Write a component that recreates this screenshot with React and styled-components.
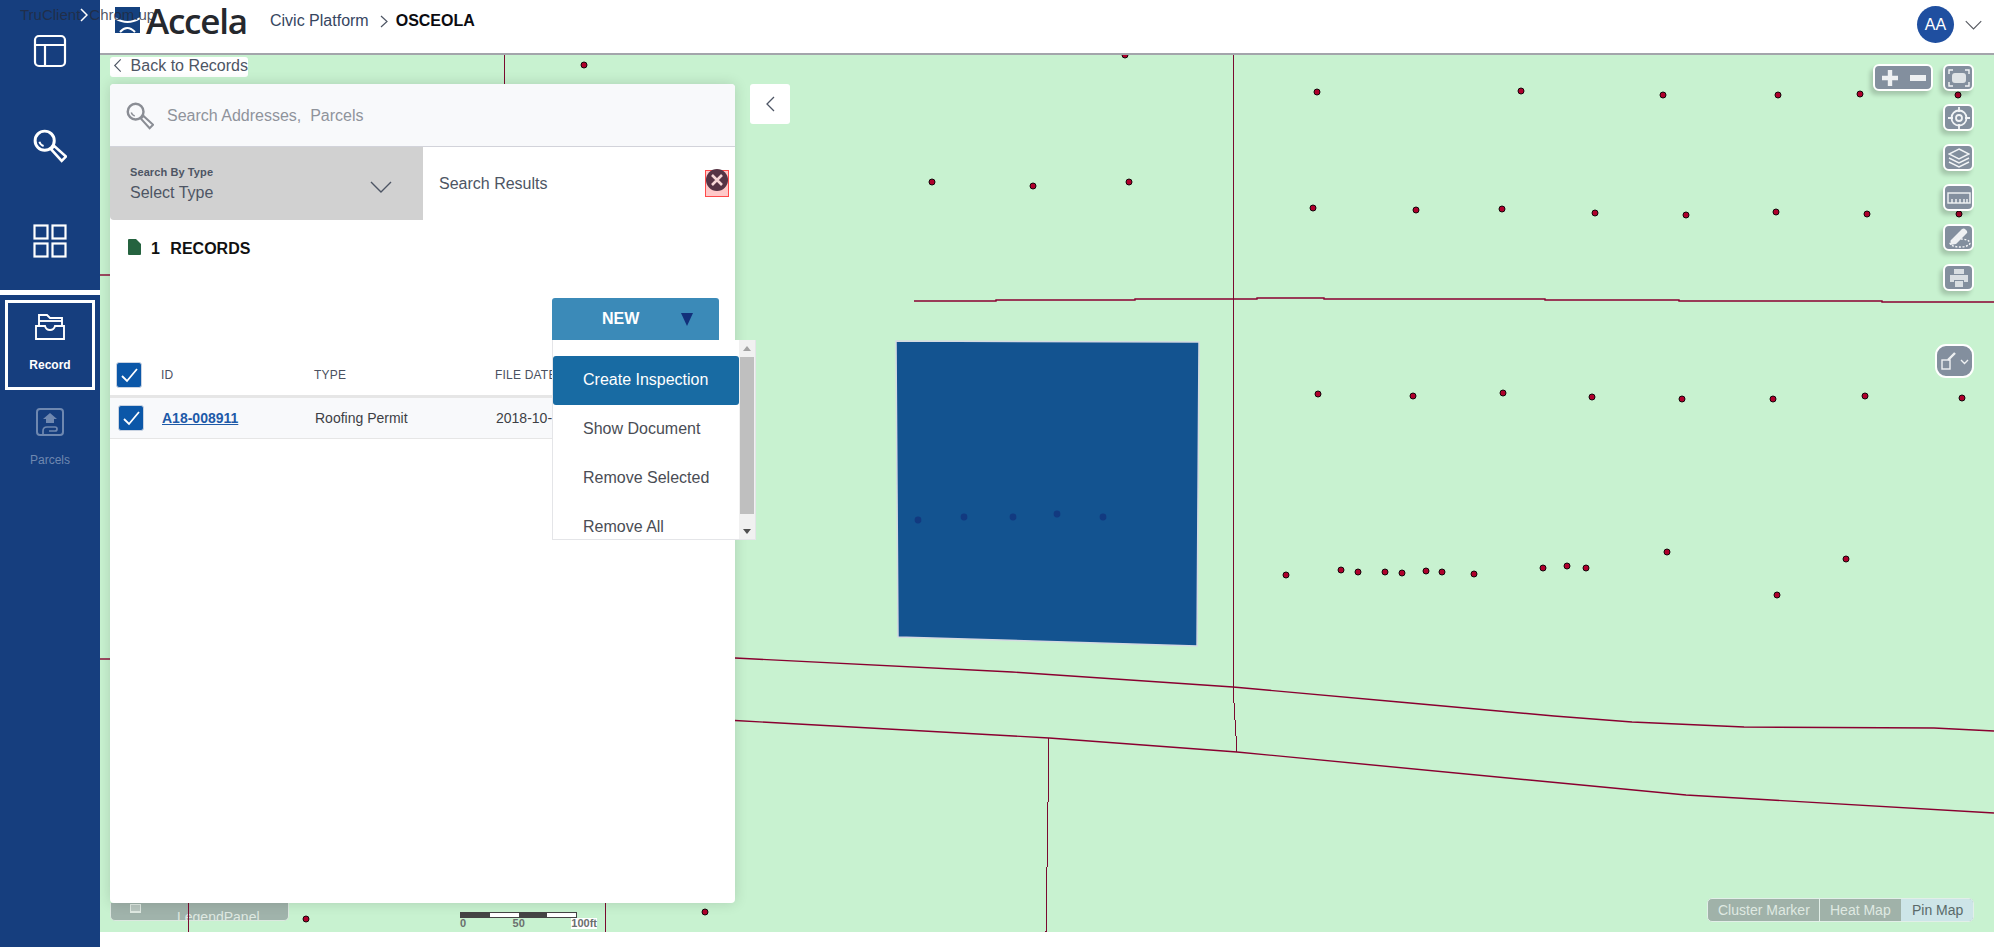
import React from 'react';
import styled, { createGlobalStyle } from 'styled-components';

const GlobalStyle = createGlobalStyle`
    html, body {
        margin: 0;
        padding: 0;
        background: #fff;
        font-family: "Liberation Sans", Arial, sans-serif;
    }
    * { box-sizing: border-box; }
`;

const Page = styled.div`
    display: grid;
    grid-template-columns: 100px 1fr;
    width: 1994px;
    height: 947px;
    overflow: hidden;
    position: relative;
`;

/* sidebar */
const Sidebar = styled.nav`
    background: #163e7e;
    display: flex;
    flex-direction: column;
    padding-top: 3px;
`;
const NavItem = styled.div`
    height: 95px;
    display: flex;
    align-items: center;
    justify-content: center;
`;
const NavRule = styled.div`
    height: 5px;
    margin-top: 2px;
    background: #fff;
`;
const ActiveItem = styled.div`
    width: 90px;
    height: 90px;
    margin: 5px 5px 0;
    border: 3px solid #fff;
    display: flex;
    flex-direction: column;
    align-items: center;
    padding-top: 11px;
    color: #fff;
    font-size: 12px;
    font-weight: bold;
`;
const ItemLabel = styled.span`
    margin-top: 18px;
`;
const MutedItem = styled.div`
    display: flex;
    flex-direction: column;
    align-items: center;
    padding-top: 17px;
    color: #6f88b0;
    font-size: 12px;
`;
const MutedLabel = styled.span`
    margin-top: 16px;
`;
const ToolTip = styled.div`
    position: absolute;
    left: 20px;
    top: 6px;
    font-size: 15px;
    color: rgba(35, 42, 60, 0.8);
    z-index: 5;
    white-space: nowrap;
    display: flex;
    align-items: center;
`;
const TipArrow = styled.svg`
    margin: 0 1px 0 0;
`;

/* header */
const Main = styled.div`
    display: flex;
    flex-direction: column;
`;
const Header = styled.header`
    height: 55px;
    flex: none;
    border-bottom: 2px solid #a3a5ab;
    background: #fff;
    display: flex;
    align-items: flex-start;
    padding: 7px 12px 0 15px;
`;
const LogoWord = styled.span`
    font-family: "Open Sans", sans-serif;
    font-size: 35px;
    line-height: 27px;
    font-weight: 600;
    letter-spacing: -1.2px;
    color: #25282d;
    margin-left: 6px;
    width: 124px;
`;
const Crumb = styled.span`
    font-size: 16px;
    line-height: 26px;
    margin-top: 1px;
    color: #36465f;
`;
const CrumbChevron = styled.svg`
    margin: 8px 8px 0 11px;
`;
const Org = styled.span`
    font-size: 16px;
    line-height: 26px;
    margin-top: 1px;
    font-weight: bold;
    color: #0b0b10;
`;
const UserBox = styled.div`
    margin-left: auto;
    display: flex;
    align-items: center;
    gap: 11px;
    margin-top: -1px;
`;
const Avatar = styled.div`
    width: 37px;
    height: 37px;
    border-radius: 50%;
    background: #1f4fa0;
    color: #fff;
    font-size: 16px;
    display: flex;
    align-items: center;
    justify-content: center;
`;

/* map */
const MapArea = styled.div`
    position: relative;
    flex: none;
    height: 877px;
    background: #c8f2d0;
    overflow: hidden;
`;
const MapDrawing = styled.svg`
    position: absolute;
    left: 0;
    top: 0;
`;
const BackLink = styled.div`
    position: absolute;
    left: 10px;
    top: 2px;
    width: 138px;
    height: 20px;
    background: #fff;
    border-radius: 3px;
    display: flex;
    align-items: center;
    padding: 0 0 3px 3px;
    gap: 9px;
    font-size: 16px;
    white-space: nowrap;
    color: #4d5564;
`;
const CollapseBtn = styled.div`
    position: absolute;
    left: 650px;
    top: 29px;
    width: 40px;
    height: 40px;
    background: #fff;
    border-radius: 3px;
    display: flex;
    align-items: center;
    justify-content: center;
`;

/* panel */
const Panel = styled.section`
    position: absolute;
    left: 10px;
    top: 29px;
    width: 625px;
    height: 819px;
    background: #fff;
    border-radius: 4px;
    box-shadow: 0 0 14px rgba(0, 0, 0, 0.14);
    z-index: 2;
`;
const SearchBar = styled.div`
    height: 63px;
    background: #f8f9fb;
    border-bottom: 1px solid #d2d3da;
    border-radius: 4px 4px 0 0;
    display: flex;
    align-items: center;
    padding: 2px 0 0 16px;
    gap: 13px;
    font-size: 16px;
    color: #8f939b;
`;
const TypeRow = styled.div`
    display: flex;
    height: 73px;
`;
const TypeSelect = styled.div`
    width: 313px;
    background: #d1d1d1;
    border-radius: 0 0 0 4px;
    padding: 19px 31px 0 20px;
    display: flex;
    justify-content: space-between;
`;
const TypeCaption = styled.div`
    font-size: 11px;
    font-weight: bold;
    letter-spacing: 0.1px;
    color: #4d5564;
`;
const TypeValue = styled.div`
    font-size: 16px;
    color: #4d5564;
    margin-top: 6px;
`;
const TypeChevron = styled.div`
    margin-top: 13px;
`;
const ResultsTab = styled.div`
    flex: 1;
    display: flex;
    justify-content: space-between;
    align-items: flex-start;
    padding: 23px 6px 0 16px;
    font-size: 16px;
    line-height: 27px;
    color: #4d5564;
`;
const CloseBox = styled.div`
    width: 24px;
    height: 27px;
    background: rgba(255, 60, 60, 0.28);
    border: 1px solid #ff4a4a;
    position: relative;
`;
const CloseIcon = styled.svg`
    position: absolute;
    left: 0;
    top: -2px;
`;
const RecordsRow = styled.div`
    height: 78px;
    display: flex;
    align-items: flex-start;
    padding: 19px 0 0 18px;
    gap: 10px;
    font-size: 16px;
    line-height: 20px;
    font-weight: bold;
    color: #111;
    word-spacing: 6px;
`;
const ActionRow = styled.div`
    display: flex;
    justify-content: flex-end;
    padding-right: 16px;
`;
const NewWrap = styled.div`
    position: relative;
    width: 167px;
`;
const NewButton = styled.div`
    height: 42px;
    background: #3b8ab8;
    border-radius: 3px 3px 0 0;
    color: #fff;
    font-size: 16px;
    font-weight: bold;
    display: flex;
    align-items: center;
    position: relative;
    padding-left: 50px;
`;
const Caret = styled.span`
    position: absolute;
    left: 129px;
    top: 15px;
    width: 0;
    height: 0;
    border-left: 6px solid transparent;
    border-right: 6px solid transparent;
    border-top: 13px solid #12307a;
`;
const Menu = styled.div`
    position: absolute;
    left: 0;
    top: 100%;
    width: 204px;
    height: 200px;
    background: #fff;
    border: 1px solid #e4e5e8;
    border-top: none;
    display: flex;
    overflow: hidden;
    z-index: 3;
`;
const MenuList = styled.div`
    flex: 1;
    padding-top: 16px;
`;
const MenuItem = styled.div`
    height: 49px;
    padding: 0 0 2px 30px;
    display: flex;
    align-items: center;
    font-size: 16px;
    color: ${(p) => (p.$active ? '#fff' : '#4a4d55')};
    background: ${(p) => (p.$active ? '#186ba3' : 'transparent')};
    border-radius: 3px;
`;
const ScrollTrack = styled.div`
    width: 16px;
    background: #f1f1f1;
    display: flex;
    flex-direction: column;
    align-items: center;
    padding: 6px 0 5px;
`;
const ScrollThumb = styled.div`
    width: 14px;
    height: 157px;
    margin-top: 6px;
    background: #bfbfbf;
`;
const ScrollUp = styled.span`
    border-left: 4px solid transparent;
    border-right: 4px solid transparent;
    border-bottom: 5px solid #a3a3a3;
`;
const ScrollDown = styled.span`
    margin-top: auto;
    border-left: 4px solid transparent;
    border-right: 4px solid transparent;
    border-top: 5px solid #505050;
`;
const TableHead = styled.div`
    display: grid;
    grid-template-columns: 45px 153px 181px 1fr;
    align-items: center;
    height: 58px;
    padding: 21px 0 6px 6px;
    border-bottom: 3px solid #e6e6e6;
    font-size: 12px;
    letter-spacing: 0.2px;
    color: #4a5160;
`;
const TableRow = styled.div`
    display: grid;
    grid-template-columns: 44px 153px 181px 1fr;
    align-items: center;
    height: 41px;
    padding-left: 8px;
    background: #f8f9fb;
    border-bottom: 1px solid #e6e6e6;
    font-size: 14px;
    color: #3d3f45;
`;
const RecordLink = styled.a`
    color: #1e5aa8;
    font-weight: bold;
    text-decoration: underline;
`;
const CheckBox = styled.div`
    width: 26px;
    height: 26px;
    background: #0b57a8;
    border: 1px solid #c9d3e2;
    border-radius: 3px;
    display: flex;
    align-items: center;
    justify-content: center;
`;

/* map controls */
const ControlColumn = styled.div`
    position: absolute;
    left: 1843px;
    top: 9px;
    display: flex;
    flex-direction: column;
    gap: 13px;
`;
const MapButton = styled.div`
    width: 31px;
    height: 27px;
    background: #838f9e;
    border: 2px solid #fff;
    border-radius: 6px;
    box-shadow: -3px 4px 4px rgba(0, 0, 0, 0.18);
    display: flex;
    align-items: center;
    justify-content: center;
`;
const ZoomButton = styled(MapButton)`
    position: absolute;
    left: 1773px;
    top: 9px;
    width: 60px;
    justify-content: space-around;
`;
const DrawButton = styled.div`
    position: absolute;
    left: 1835px;
    top: 289px;
    width: 39px;
    height: 34px;
    background: #838f9e;
    border: 2px solid #fff;
    border-radius: 11px;
    display: flex;
    align-items: center;
    justify-content: center;
`;
const LayerSwitch = styled.div`
    position: absolute;
    left: 1607px;
    top: 843px;
    height: 24px;
    display: flex;
    border: 1px solid #e2efe8;
    border-radius: 5px;
    overflow: hidden;
    font-size: 14px;
    background: #a0b2a9;
    color: #dfe9e2;
`;
const LayerTab = styled.div`
    padding: 0 0 0 ${(p) => p.$pad}px;
    width: ${(p) => p.$w}px;
    display: flex;
    align-items: center;
    border-right: ${(p) => (p.$line ? '1px solid #e2efe8' : 'none')};
    background: ${(p) => (p.$on ? '#cde5e8' : 'transparent')};
    color: ${(p) => (p.$on ? '#5a6a6a' : '#dfe9e2')};
`;
const LegendPanel = styled.div`
    position: absolute;
    left: 10px;
    top: 848px;
    width: 179px;
    height: 18px;
    background: #a0b3ab;
    border-radius: 0 0 5px 5px;
    border: 1px solid #dce8e0;
    border-top: none;
    overflow: hidden;
    padding: 1px 0 0 19px;
    display: flex;
    color: #dfe9e2;
    font-size: 14px;
    line-height: 16px;
`;
const LegendBox = styled.div`
    width: 11px;
    height: 9px;
    background: #b9c7c0;
    border: 1px solid #dfe9e2;
    border-bottom-width: 2px;
`;
const LegendText = styled.span`
    margin: 5px 0 0 36px;
`;
const ScaleBar = styled.div`
    position: absolute;
    left: 360px;
    top: 857px;
    width: 117px;
    color: #6b6f6e;
    font-size: 11px;
    font-weight: bold;
`;
const ScaleTrack = styled.div`
    display: flex;
    height: 6px;
    border: 1px solid #444;
`;
const ScaleCell = styled.span`
    flex: 1;
    background: ${(p) => (p.$dark ? '#444' : '#fff')};
`;
const ScaleLabels = styled.div`
    display: flex;
    justify-content: space-between;
    line-height: 11px;
    margin-right: -20px;
`;
const ScaleEnd = styled.span`
    background: #fff;
`;
const Footer = styled.div`
    flex: 1;
    background: #fff;
`;

const redDots = [
    [1125, 55], [584, 65], [1317, 92], [1521, 91], [1663, 95], [1778, 95], [1860, 94], [1958, 95],
    [932, 182], [1033, 186], [1129, 182],
    [1313, 208], [1416, 210], [1502, 209], [1595, 213], [1686, 215], [1776, 212], [1867, 214], [1959, 214],
    [1318, 394], [1413, 396], [1503, 393], [1592, 397], [1682, 399], [1773, 399], [1865, 396], [1962, 398],
    [1286, 575], [1341, 570], [1358, 572], [1385, 572], [1402, 573], [1426, 571], [1442, 572], [1474, 574],
    [1543, 568], [1567, 566], [1586, 568], [1667, 552], [1846, 559], [1777, 595],
    [306, 919], [705, 912],
];
const blueDots = [[918, 520], [964, 517], [1013, 517], [1057, 514], [1103, 517]];
const roads = [
    'M914 301H996V300H1135V299H1257V298H1324V299H1545V300H1679V301H1882V302H1994',
    'M735 658L1012 672L1233 687L1399 702L1554 716L1632 722L1744 727L1934 728L1994 731',
    'M735 720.5L1049 738L1237 752L1686 795L1994 813',
    'M100 275H110',
    'M100 659H110',
];
const parcelEdges = [
    'M1233 55V687L1237 752',
    'M1049 738L1046 932',
    'M504 55V84',
    'M188.5 903V932',
    'M605.5 903V932',
];

function MapLayer() {
    return (
        <MapDrawing width="1894" height="877" viewBox="100 55 1894 877">
            {roads.map((d) => (
                <path key={d} d={d} fill="none" stroke="#8a0030" strokeWidth="1.4" />
            ))}
            {parcelEdges.map((d) => (
                <path key={d} d={d} fill="none" stroke="#7a0a30" strokeWidth="1" shapeRendering="crispEdges" />
            ))}
            <polygon points="896,341 1199,342 1197,646 898,637" fill="#135390" stroke="#d5dae2" strokeWidth="1.5" />
            {redDots.map(([x, y]) => (
                <circle key={`${x}-${y}`} cx={x} cy={y} r="3" fill="#b0002c" stroke="#14060a" strokeWidth="1" />
            ))}
            {blueDots.map(([x, y]) => (
                <circle key={x} cx={x} cy={y} r="3.4" fill="#123a80" />
            ))}
        </MapDrawing>
    );
}

const Check = () => (
    <svg width="20" height="20" viewBox="0 0 20 20">
        <path d="M3 11L8 16L18 4" fill="none" stroke="#fff" strokeWidth="1.8" />
    </svg>
);

const Chevron = ({ size = 10, h = 16, color = '#4d5564', sw = 1.3 }) => (
    <svg width={size} height={h} viewBox="0 0 10 16">
        <path d="M9 1L2 8L9 15" fill="none" stroke={color} strokeWidth={sw} />
    </svg>
);

const DownChevron = ({ w = 22, h = 12, color = '#4d5564' }) => (
    <svg width={w} height={h} viewBox="0 0 22 12">
        <path d="M1 1L11 11L21 1" fill="none" stroke={color} strokeWidth="1.4" />
    </svg>
);

const Magnifier = ({ color, size }) => (
    <svg width={size} height={size} viewBox="0 0 32 32">
        <circle cx="11" cy="11" r="9" fill="none" stroke={color} strokeWidth="2.8" />
        <path d="M6 12a6 6 0 0 0 4 4" fill="none" stroke={color} strokeWidth="1.8" />
        <path d="M17 19L20 16L31 26L27 30Z" fill="none" stroke={color} strokeWidth="2.4" />
    </svg>
);

const Logo = () => (
    <svg width="25" height="26" viewBox="0 0 25 26">
        <rect width="25" height="26" fill="#14417f" />
        <path d="M0 11Q12.5 19 25 11" fill="none" stroke="#fff" strokeWidth="2" />
        <path d="M5 25Q12 17 20 25" fill="none" stroke="#fff" strokeWidth="2" />
    </svg>
);

const ic = { fill: 'none', stroke: '#f2f4f6', strokeWidth: 1.4 };

function App() {
    return (
        <Page>
            <GlobalStyle />
            <ToolTip>
                TruClient
                <TipArrow width="8" height="14" viewBox="0 0 8 14">
                    <path d="M1 1L7 7L1 13" fill="none" stroke="#fff" strokeWidth="1.5" />
                </TipArrow>
                Chrom.up
            </ToolTip>
            <Sidebar>
                <NavItem>
                    <svg width="34" height="34" viewBox="0 0 34 34" fill="none" stroke="#fff" strokeWidth="2.2">
                        <rect x="2" y="2" width="30" height="30" rx="4" />
                        <path d="M2 11H32M12 11V32" />
                    </svg>
                </NavItem>
                <NavItem>
                    <Magnifier color="#fff" size={34} />
                </NavItem>
                <NavItem>
                    <svg width="34" height="34" viewBox="0 0 34 34" fill="none" stroke="#fff" strokeWidth="2.2">
                        <rect x="1.5" y="1.5" width="13" height="13" />
                        <rect x="19.5" y="1.5" width="13" height="13" />
                        <rect x="1.5" y="19.5" width="13" height="13" />
                        <rect x="19.5" y="19.5" width="13" height="13" />
                    </svg>
                </NavItem>
                <NavRule />
                <ActiveItem>
                    <svg width="30" height="26" viewBox="0 0 30 26" fill="none" stroke="#fff" strokeWidth="1.9">
                        <path d="M4 12V1H12L15 4H27V12" />
                        <path d="M4 7H27" />
                        <path d="M1 12H10Q11 16 15 16Q19 16 20 12H29V25H1Z" />
                    </svg>
                    <ItemLabel>Record</ItemLabel>
                </ActiveItem>
                <MutedItem>
                    <svg width="30" height="30" viewBox="0 0 30 30" fill="none" stroke="#6f88b0" strokeWidth="2">
                        <rect x="2" y="2" width="26" height="26" rx="3" />
                        <path d="M15 6L22 12H19V16H11V12H8Z" fill="#6f88b0" stroke="none" />
                        <path d="M8 27V24Q8 20 12 20H20Q22 20 22 22T20 24H14" strokeWidth="1.7" />
                    </svg>
                    <MutedLabel>Parcels</MutedLabel>
                </MutedItem>
            </Sidebar>
            <Main>
                <Header>
                    <Logo />
                    <LogoWord>Accela</LogoWord>
                    <Crumb>Civic Platform</Crumb>
                    <CrumbChevron width="8" height="13" viewBox="0 0 8 13">
                        <path d="M1 1L7 6.5L1 12" fill="none" stroke="#4d5564" strokeWidth="1.2" />
                    </CrumbChevron>
                    <Org>OSCEOLA</Org>
                    <UserBox>
                        <Avatar>AA</Avatar>
                        <DownChevron w={17} h={10} color="#55585f" />
                    </UserBox>
                </Header>
                <MapArea>
                    <LegendPanel>
                        <LegendBox />
                        <LegendText>LegendPanel</LegendText>
                    </LegendPanel>
                    <ScaleBar>
                        <ScaleTrack>
                            <ScaleCell $dark />
                            <ScaleCell />
                            <ScaleCell $dark />
                            <ScaleCell />
                        </ScaleTrack>
                        <ScaleLabels>
                            <span>0</span>
                            <span>50</span>
                            <ScaleEnd>100ft</ScaleEnd>
                        </ScaleLabels>
                    </ScaleBar>
                    <MapLayer />
                    <BackLink>
                        <Chevron size={9} h={15} />
                        Back to Records
                    </BackLink>
                    <Panel>
                        <SearchBar>
                            <Magnifier color="#8a8d94" size={28} />
                            Search Addresses,&nbsp; Parcels
                        </SearchBar>
                        <TypeRow>
                            <TypeSelect>
                                <div>
                                    <TypeCaption>Search By Type</TypeCaption>
                                    <TypeValue>Select Type</TypeValue>
                                </div>
                                <TypeChevron>
                                    <DownChevron />
                                </TypeChevron>
                            </TypeSelect>
                            <ResultsTab>
                                Search Results
                                <CloseBox>
                                    <CloseIcon width="22" height="22" viewBox="0 0 22 22">
                                        <circle cx="11" cy="11" r="11" fill="#553344" />
                                        <path d="M6 6L16 16M16 6L6 16" stroke="#f6d6d6" strokeWidth="2.6" />
                                    </CloseIcon>
                                </CloseBox>
                            </ResultsTab>
                        </TypeRow>
                        <RecordsRow>
                            <svg width="13" height="16" viewBox="0 0 13 16">
                                <path d="M1 0H8L13 5V15Q13 16 12 16H1Q0 16 0 15V1Q0 0 1 0Z" fill="#25633f" />
                            </svg>
                            1 RECORDS
                        </RecordsRow>
                        <ActionRow>
                            <NewWrap>
                                <NewButton>
                                    NEW
                                    <Caret />
                                </NewButton>
                                <Menu>
                                    <MenuList>
                                        <MenuItem $active>Create Inspection</MenuItem>
                                        <MenuItem>Show Document</MenuItem>
                                        <MenuItem>Remove Selected</MenuItem>
                                        <MenuItem>Remove All</MenuItem>
                                    </MenuList>
                                    <ScrollTrack>
                                        <ScrollUp />
                                        <ScrollThumb />
                                        <ScrollDown />
                                    </ScrollTrack>
                                </Menu>
                            </NewWrap>
                        </ActionRow>
                        <TableHead>
                            <CheckBox><Check /></CheckBox>
                            <span>ID</span>
                            <span>TYPE</span>
                            <span>FILE DATE</span>
                        </TableHead>
                        <TableRow>
                            <CheckBox><Check /></CheckBox>
                            <RecordLink>A18-008911</RecordLink>
                            <span>Roofing Permit</span>
                            <span>2018-10-</span>
                        </TableRow>
                    </Panel>
                    <CollapseBtn>
                        <Chevron size={10} h={16} />
                    </CollapseBtn>
                    <ZoomButton>
                        <svg width="18" height="18" viewBox="0 0 18 18">
                            <path d="M9 1V17M1 9H17" stroke="#eef0f2" strokeWidth="4.4" />
                        </svg>
                        <svg width="16" height="6" viewBox="0 0 16 6">
                            <rect width="16" height="6" fill="#eef0f2" />
                        </svg>
                    </ZoomButton>
                    <ControlColumn>
                        <MapButton>
                            <svg width="22" height="18" viewBox="0 0 22 18" {...ic}>
                                <path d="M1 5V1H5M17 1H21V5M21 13V17H17M5 17H1V13" />
                                <rect x="4" y="4" width="14" height="10" rx="3" fill="#dfe3e6" stroke="none" />
                            </svg>
                        </MapButton>
                        <MapButton>
                            <svg width="22" height="22" viewBox="0 0 22 22" {...ic} strokeWidth="1.8">
                                <circle cx="11" cy="11" r="7.5" />
                                <circle cx="11" cy="11" r="3" />
                                <path d="M11 0V5M11 17V22M0 11H5M17 11H22" />
                            </svg>
                        </MapButton>
                        <MapButton>
                            <svg width="22" height="20" viewBox="0 0 22 20" {...ic}>
                                <path d="M11 1L21 6L11 11L1 6Z" />
                                <path d="M1 10L11 15L21 10M1 14L11 19L21 14" />
                            </svg>
                        </MapButton>
                        <MapButton>
                            <svg width="24" height="12" viewBox="0 0 24 12" {...ic}>
                                <rect x="1" y="1" width="22" height="10" />
                                <path d="M5 11V7M9 11V7M13 11V7M17 11V7M20 11V7" />
                            </svg>
                        </MapButton>
                        <MapButton>
                            <svg width="24" height="21" viewBox="0 0 24 21" {...ic}>
                                <path d="M4 13L15 2Q17 1 18 2L20 4Q21 6 19 7L9 17L3 18Z" fill="#eef0f2" stroke="none" />
                                <ellipse cx="13" cy="16" rx="10" ry="4" strokeDasharray="2 1.5" />
                            </svg>
                        </MapButton>
                        <MapButton>
                            <svg width="20" height="18" viewBox="0 0 20 18">
                                <path d="M5 0H15V5H5Z M1 6H19V13H15V11H5V13H1Z M6 12H14V18H6Z" fill="#d9dee2" />
                            </svg>
                        </MapButton>
                    </ControlColumn>
                    <DrawButton>
                        <svg width="28" height="20" viewBox="0 0 28 20" fill="none" stroke="#eef0f2">
                            <rect x="1" y="9" width="8" height="9" strokeWidth="1.4" />
                            <path d="M7 9L14 2" strokeWidth="2.4" />
                            <path d="M20 9L23.5 12.5L27 9" strokeWidth="1.4" />
                        </svg>
                    </DrawButton>
                    <LayerSwitch>
                        <LayerTab $w={112} $pad={10} $line>Cluster Marker</LayerTab>
                        <LayerTab $w={81} $pad={10}>Heat Map</LayerTab>
                        <LayerTab $w={72} $pad={11} $on>Pin Map</LayerTab>
                    </LayerSwitch>
                </MapArea>
                <Footer />
            </Main>
        </Page>
    );
}

export default App;
